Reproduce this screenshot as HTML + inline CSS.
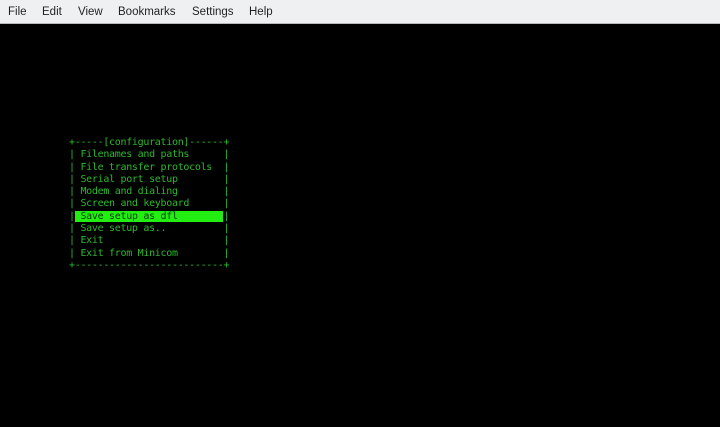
<!DOCTYPE html>
<html><head><style>
html,body{margin:0;padding:0;width:720px;height:427px;overflow:hidden;background:#000;}
.menu{position:absolute;left:0;top:0;width:720px;height:24px;background:#eff0f1;border-bottom:1px solid #b8b9ba;box-sizing:border-box;font-family:"Liberation Sans",sans-serif;font-size:11.5px;color:#1f2223;}
.menu span{position:absolute;top:6px;}
pre{position:absolute;left:69px;top:137px;margin:0;font-family:"DejaVu Sans Mono","Liberation Mono",monospace;font-size:10px;letter-spacing:-0.3px;line-height:12.3px;color:#2db82d;}
.hl{background:#22ee11;color:#0a3a0a;}
</style></head><body>
<div class="menu"><span style="left:8px">File</span><span style="left:42px">Edit</span><span style="left:78px">View</span><span style="left:118px">Bookmarks</span><span style="left:192px">Settings</span><span style="left:249px">Help</span></div>
<pre>+-----[configuration]------+
| Filenames and paths      |
| File transfer protocols  |
| Serial port setup        |
| Modem and dialing        |
| Screen and keyboard      |
|<span class="hl"> Save setup as dfl        </span>|
| Save setup as..          |
| Exit                     |
| Exit from Minicom        |
+--------------------------+</pre>
</body></html>
